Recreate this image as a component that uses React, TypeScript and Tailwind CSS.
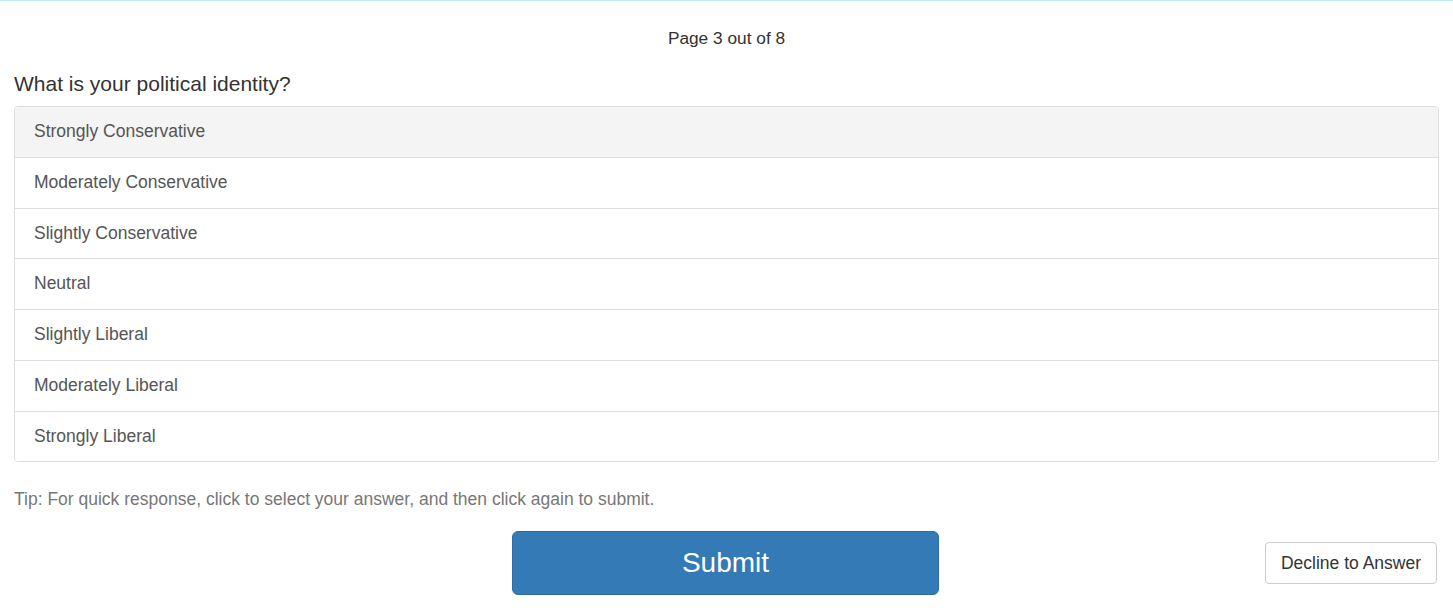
import React from "react";

const options = [
  "Strongly Conservative",
  "Moderately Conservative",
  "Slightly Conservative",
  "Neutral",
  "Slightly Liberal",
  "Moderately Liberal",
  "Strongly Liberal",
];

export default function App() {
  return (
    <div
      className="min-h-[612px] bg-white border-t border-[#bde9f2] px-[14px] text-[#333]"
      style={{ fontFamily: '"Liberation Sans", Arial, sans-serif' }}
    >
      <div className="pt-[27px] text-center text-[17.3px] leading-[20px]">Page 3 out of 8</div>
      <div className="mt-[24px] text-[21px] leading-[24px]">What is your political identity?</div>
      <div className="mt-[10px] border border-[#ddd] rounded-[4px] overflow-hidden">
        {options.map((o, i) => (
          <div
            key={o}
            className={
              "px-[19px] py-[14px] text-[17.5px] leading-[21.75px] text-[#555] " +
              (i === 0 ? "bg-[#f4f4f4] " : "bg-white ") +
              (i < options.length - 1 ? "border-b border-[#ddd]" : "")
            }
          >
            {o}
          </div>
        ))}
      </div>
      <div className="mt-[27px] text-[17.5px] leading-[20px] text-[#777]">
        Tip: For quick response, click to select your answer, and then click again to submit.
      </div>
      <div className="mt-[22px] grid grid-cols-[1fr_auto_1fr] items-center pr-[2px]">
        <div />
        <button className="w-[427px] h-[64px] bg-[#337ab7] border border-[#2e6da4] rounded-[6px] text-white text-[28px] leading-none">
          Submit
        </button>
        <div className="flex justify-end">
          <button className="h-[42px] px-[15px] border border-[#ccc] rounded-[4px] bg-white text-[#333] text-[17.5px]">
            Decline to Answer
          </button>
        </div>
      </div>
    </div>
  );
}
